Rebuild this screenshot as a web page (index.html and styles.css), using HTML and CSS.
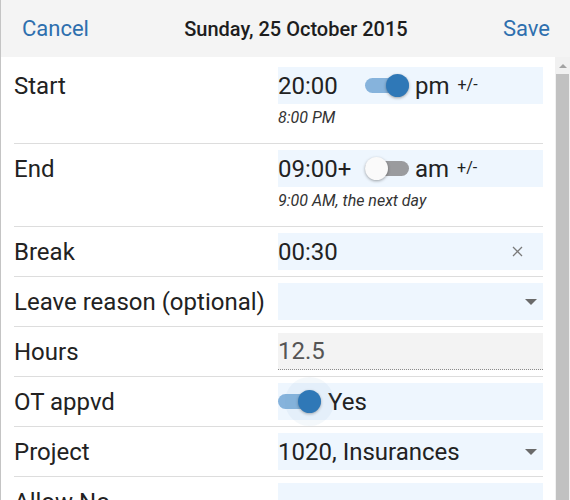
FILE: index.html
```html
<!DOCTYPE html>
<html>
<head>
<meta charset="utf-8">
<link rel="stylesheet" href="styles.css">
</head>
<body>
<div class="app">
  <header class="bar">
    <span class="link">Cancel</span>
    <span class="title">Sunday, 25 October 2015</span>
    <span class="link">Save</span>
  </header>
  <div class="main">
    <div class="form">
      <div class="row">
        <div class="label">Start</div>
        <div class="field">
          <div class="box">
            <span class="time">20:00</span>
            <span class="toggle on"><span class="knob"></span></span>
            <span class="ampm">pm</span><span class="pm">+/-</span>
          </div>
          <div class="sub">8:00 PM</div>
        </div>
      </div>
      <div class="row">
        <div class="label">End</div>
        <div class="field">
          <div class="box">
            <span class="time">09:00+</span>
            <span class="toggle off"><span class="knob"></span></span>
            <span class="ampm">am</span><span class="pm">+/-</span>
          </div>
          <div class="sub">9:00 AM, the next day</div>
        </div>
      </div>
      <div class="row">
        <div class="label">Break</div>
        <div class="field">
          <div class="box"><span class="grow">00:30</span><svg class="clear" width="11" height="11" viewBox="0 0 11 11"><path d="M1 1L10 10M10 1L1 10" stroke="#7a7a7a" stroke-width="1.3" fill="none"/></svg></div>
        </div>
      </div>
      <div class="row">
        <div class="label">Leave reason (optional)</div>
        <div class="field">
          <div class="box"><span class="grow"></span><span class="caret"></span></div>
        </div>
      </div>
      <div class="row">
        <div class="label">Hours</div>
        <div class="field">
          <div class="box readonly">12.5</div>
        </div>
      </div>
      <div class="row">
        <div class="label">OT appvd</div>
        <div class="field">
          <div class="box">
            <span class="toggle on ot"><span class="knob halo"></span></span>
            <span class="yes">Yes</span>
          </div>
        </div>
      </div>
      <div class="row">
        <div class="label">Project</div>
        <div class="field">
          <div class="box"><span class="grow">1020, Insurances</span><span class="caret"></span></div>
        </div>
      </div>
      <div class="row">
        <div class="label">Allow No</div>
        <div class="field">
          <div class="box"></div>
        </div>
      </div>
    </div>
    <div class="scrollbar">
      <div class="arrow"></div>
      <div class="thumb"></div>
    </div>
  </div>
</div>
</body>
</html>
```
FILE: styles.css
```css
html, body {
  margin: 0;
  padding: 0;
  height: 500px;
  overflow: hidden;
  background: #ffffff;
}
body {
  font-family: Roboto, "Liberation Sans", sans-serif;
  color: #222222;
}
.app {
  height: 500px;
  display: flex;
  flex-direction: column;
  border-left: 1px solid #c4c4c4;
}
.bar {
  height: 57px;
  flex: none;
  background: #f4f4f4;
  display: flex;
  align-items: center;
  justify-content: space-between;
  padding: 0 20px 0 21px;
  box-sizing: border-box;
}
.link {
  color: #2e6fae;
  font-size: 22px;
}
.title {
  font-size: 20px;
  font-weight: 500;
  color: #1d1d1d;
}
.main {
  flex: 1;
  display: flex;
  min-height: 0;
  overflow: hidden;
}
.form {
  flex: 1;
  padding: 4px 12px 0 13px;
  overflow: hidden;
}
.row {
  display: flex;
  align-items: flex-start;
  border-bottom: 1px solid #dddddd;
  padding: 6px 0;
}
.label {
  width: 264px;
  flex: none;
  height: 37px;
  display: flex;
  align-items: center;
  font-size: 24px;
  white-space: nowrap;
}
.field {
  flex: 1;
}
.box {
  height: 37px;
  background: #eef6fe;
  display: flex;
  align-items: center;
  font-size: 24px;
  white-space: nowrap;
}
.grow {
  flex: 1;
}
.time {
  width: 87px;
}
.toggle {
  position: relative;
  width: 44px;
  height: 15px;
  border-radius: 8px;
  flex: none;
}
.toggle.on {
  background: #86b3dc;
}
.toggle.off {
  background: #9a9b9e;
}
.knob {
  position: absolute;
  top: -4px;
  width: 23px;
  height: 23px;
  border-radius: 50%;
  box-shadow: 0 1px 3px rgba(0, 0, 0, 0.35);
}
.toggle.on .knob {
  right: 0;
  background: #2f78b7;
}
.toggle.off .knob {
  left: 0;
  background: #fafafa;
}
.knob.halo {
  box-shadow: 0 1px 3px rgba(0, 0, 0, 0.3), 0 0 0 13px rgba(120, 160, 200, 0.08);
}
.toggle.ot {
  width: 43px;
}
.ampm {
  margin-left: 6px;
}
.pm {
  font-size: 16px;
  margin-left: 8px;
  position: relative;
  top: -1px;
}
.yes {
  margin-left: 7px;
}
.sub {
  font-size: 16px;
  font-style: italic;
  color: #333333;
  line-height: 19px;
  padding: 4px 0 10px;
}
.clear {
  margin-right: 20px;
}
.caret {
  width: 0;
  height: 0;
  border-left: 6px solid transparent;
  border-right: 6px solid transparent;
  border-top: 6px solid #6a6a6a;
  margin-right: 6px;
}
.box.readonly {
  background: #f3f3f3;
  color: #555555;
  border-bottom: 1px dotted #8a8a8a;
  box-sizing: border-box;
}
.scrollbar {
  width: 15px;
  flex: none;
  background: #f1f1f1;
  display: flex;
  flex-direction: column;
  align-items: center;
}
.arrow {
  width: 0;
  height: 0;
  border-left: 4px solid transparent;
  border-right: 4px solid transparent;
  border-bottom: 4px solid #a3a3a3;
  margin: 7px 0 6px;
}
.thumb {
  flex: 1;
  width: 13px;
  background: #c1c1c1;
}
```
